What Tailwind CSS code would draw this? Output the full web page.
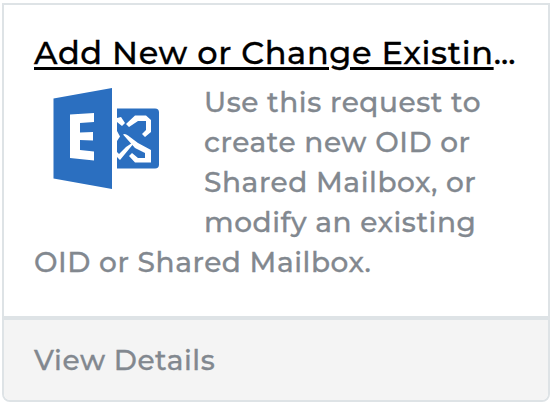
<!DOCTYPE html>
<html lang="en">
<head>
  <meta charset="UTF-8" />
  <meta name="viewport" content="width=device-width, initial-scale=1.0"/>
  <title>Service Catalog</title>
  <script src="https://cdn.jsdelivr.net/npm/@tailwindcss/browser@4"></script>
</head>
<body class="bg-white h-[402px] overflow-hidden pt-[3px] pl-[2px] font-['Montserrat','Inter',sans-serif] font-medium [-webkit-text-stroke:0.3px]">

  <div class="w-[548px] h-[399px] flex flex-col border-2 border-[#dee3e6] rounded-b-lg overflow-hidden">
    <!-- Card body -->
    <div class="h-[311px] px-[30px] pt-7">
      <h2 class="text-[32px] leading-[40px] tracking-[0.02em] text-black whitespace-nowrap"><a href="#" class="underline decoration-[3px] underline-offset-[3px]">Add New or Change Existin</a><span class="tracking-normal">...</span></h2>

      <svg class="float-left w-[150px] h-[130px] mt-[10px] mr-5" viewBox="0 0 150 130">
        <path fill="#2b6fc0" d="M19.500 15.500L78 5V106L19.500 95.500Z"/>
        <path fill="#fff" d="M36 31.500L60 30V39L46 40V49.500L59 49V57.500L46 57V67L60 68.500V77.500L36 75Z"/>
        <path fill="#2b6fc0" d="M83 25.500H121Q125 25.500 125 29.500V81.500Q125 85.500 121 85.500H83Z"/>
        <path fill="#fff" d="M92 41L101 32.500H112L117 37V49L111 54L108 51L112 47V38H104L95 44Z"/>
        <path fill="#fff" d="M89 51.500Q91 50 94 52.500L104 60L117 67V79.500H101L95 73L98 70L104 75H111V70L101 65Z"/>
        <path fill="#fff" d="M83 35L87 34L91 40L88 43L83 39Z"/>
        <path fill="#fff" d="M83 48L86 53.500L83 58Z"/>
        <path fill="#fff" d="M83 69L85 71L92 64L98 60Q100 60 98 62.500L86 77L83 74Z"/>
      </svg>
      <p class="pt-[9px] text-[28px] leading-[40px] tracking-[0.02em] text-[#82888f] whitespace-nowrap">
        Use this request to<br>
        create new OID or<br>
        Shared Mailbox, or<br>
        modify an existing<br>
        OID or Shared Mailbox.
      </p>
    </div>

    <!-- Card footer -->
    <div class="flex-1 border-t-4 border-[#dee3e6] bg-[#f4f4f4] px-[30px] pt-5">
      <a href="#" class="block text-[28px] leading-[40px] tracking-[0.02em] text-[#82888f]">View Details</a>
    </div>
  </div>

</body>
</html>
